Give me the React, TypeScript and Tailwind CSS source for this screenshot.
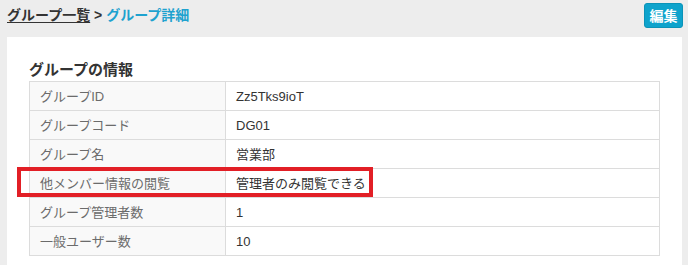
const rows = [
  { label: 'グループID', value: 'Zz5Tks9ioT' },
  { label: 'グループコード', value: 'DG01' },
  { label: 'グループ名', value: '営業部' },
  { label: '他メンバー情報の閲覧', value: '管理者のみ閲覧できる' },
  { label: 'グループ管理者数', value: '1' },
  { label: '一般ユーザー数', value: '10' },
]

export default function App() {
  return (
    <main
      className="min-h-screen w-[688px] h-[265px] overflow-hidden bg-[#ededed]"
      style={{ fontFamily: '"Liberation Sans", "Noto Sans CJK JP", sans-serif' }}
    >
      {/* header */}
      <div className="flex items-start justify-between pl-[7px] pr-[5px] h-[37px]">
        <div className="mt-[5px] text-[14px] leading-[20px] font-bold text-[#333]">
          <a href="#" className="underline underline-offset-2">グループ一覧</a>
          <span> &gt; </span>
          <span className="text-[#1ea2cf]">グループ詳細</span>
        </div>
        <button className="mt-[3px] w-[39px] h-[25px] rounded-[3px] bg-[#0ea3cc] border border-[#0b93b8] text-white text-[14px] font-bold leading-none">
          編集
        </button>
      </div>

      {/* panel */}
      <section className="ml-[7px] w-[675px] h-[228px] bg-white px-[22px] pt-[22px]">
        <h2 className="text-[15px] leading-[22px] font-bold text-[#333]">グループの情報</h2>
        <div className="relative">
          <table className="w-[631px] border-collapse text-[13px]">
            <tbody>
              {rows.map((r) => (
                <tr key={r.label}>
                  <td className="w-[196px] h-[29px] border border-[#dcdcdc] bg-[#f9f9f9] px-[10px] text-[#6b6b6b] leading-none">
                    {r.label}
                  </td>
                  <td className="h-[29px] border border-[#dcdcdc] px-[10px] text-[#333] leading-none">
                    {r.value}
                  </td>
                </tr>
              ))}
            </tbody>
          </table>
          {/* annotation */}
          <div className="absolute top-[86px] left-[-12px] w-[356px] h-[30px] border-[4px] border-[#e21f26] pointer-events-none" />
        </div>
      </section>
    </main>
  )
}
